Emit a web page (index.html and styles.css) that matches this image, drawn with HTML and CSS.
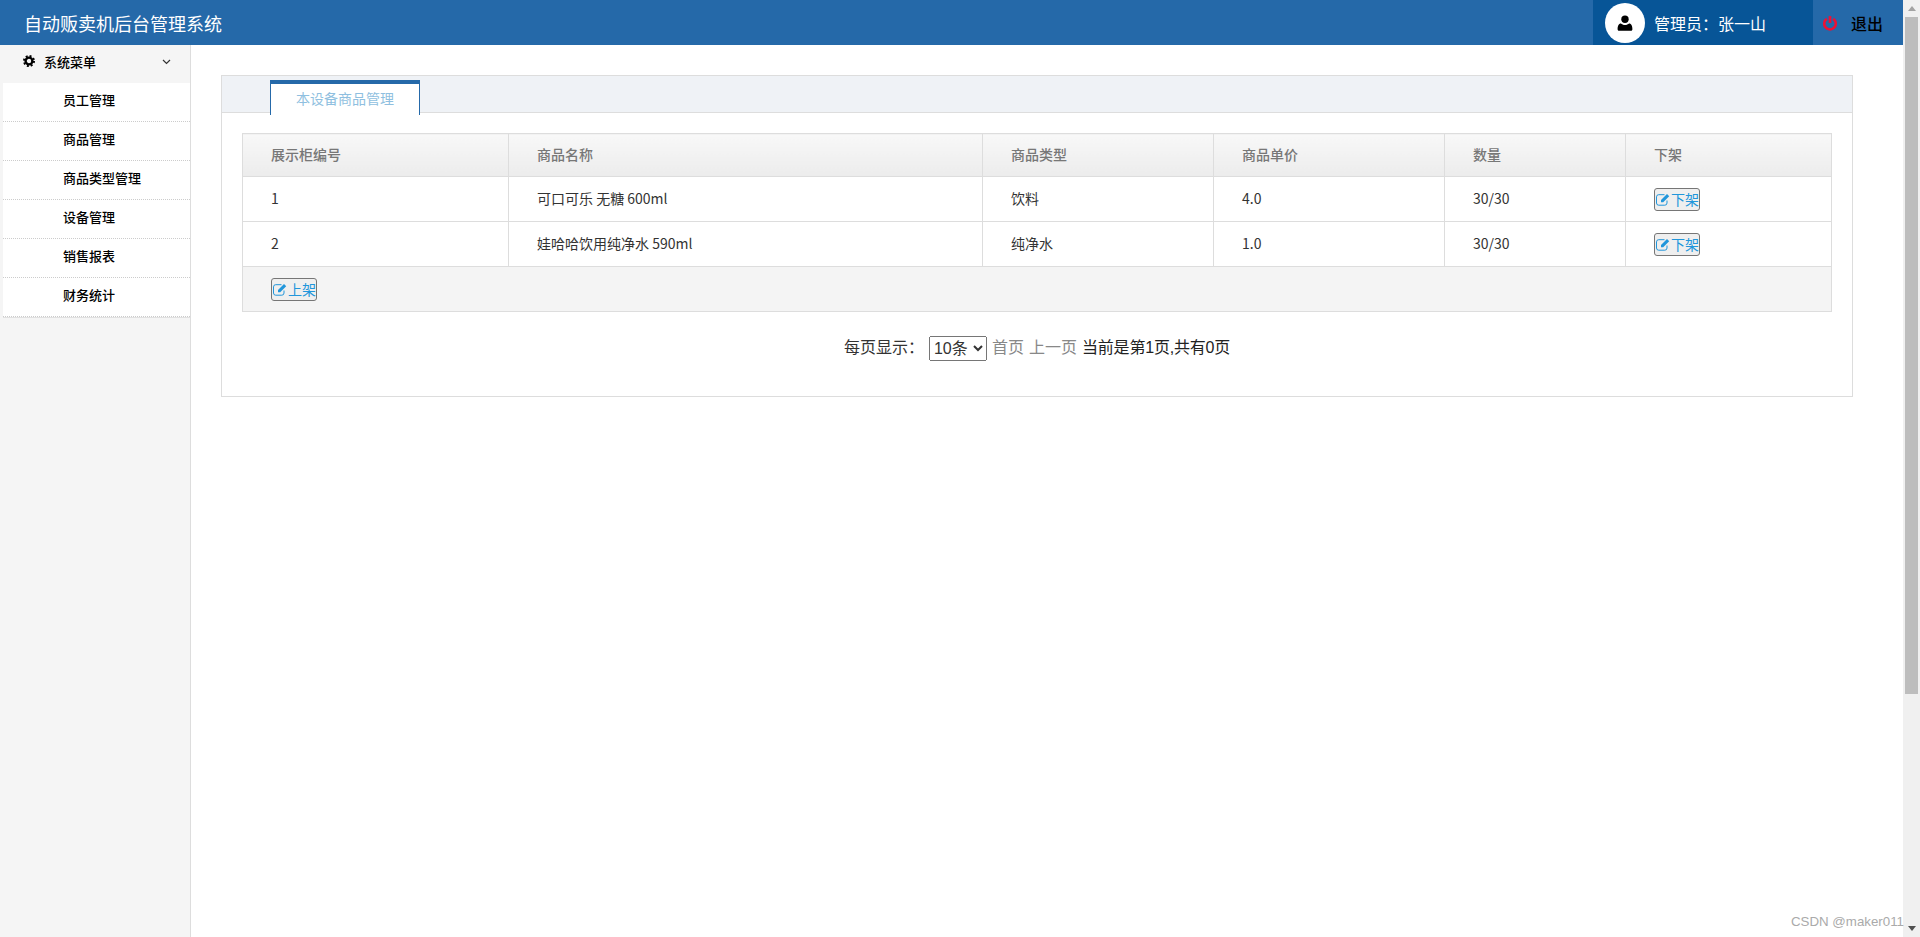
FILE: index.html
```html
<!DOCTYPE html>
<html lang="zh-CN">
<head>
  <meta charset="UTF-8">
  <title>自动贩卖机后台管理系统</title>
  <link rel="stylesheet" href="styles.css">
</head>

<body>
  <div class="app">
    <div class="content">
      <header class="topbar">
        <div class="brand">自动贩卖机后台管理系统</div>
        <div class="user-box">
          <span class="avatar">
            <svg width="16" height="16" viewBox="0 0 16 16"><circle cx="8" cy="4.2" r="3.7" fill="#000"/><path d="M2 15.800c-.9 0-1.400-.6-1.400-1.500 0-3.300 1-5.800 3.300-5.800 1 .9 2.500 1.500 4.100 1.500s3.100-.6 4.100-1.500c2.300 0 3.300 2.500 3.300 5.800 0 .9-.5 1.500-1.400 1.500z" fill="#000"/></svg>
          </span>
          <span class="user-name">管理员：张一山</span>
        </div>
        <a class="logout">
          <svg width="14" height="16" viewBox="0 0 14 16"><path d="M3.800 3.800a5.800 5.800 0 1 0 6.400 0" fill="none" stroke="#ee1035" stroke-width="2.600"/><path d="M7 1v7" stroke="#ee1035" stroke-width="2.600"/></svg>
          <span>退出</span>
        </a>
      </header>

      <div class="layout">
        <aside class="sidebar">
          <div class="menu-title">
            <svg class="gear" width="12" height="12" viewBox="0 0 12 12"><circle cx="6" cy="6" r="3.400" fill="none" stroke="#000" stroke-width="2.400"/><circle cx="6" cy="6" r="5" fill="none" stroke="#000" stroke-width="2" stroke-dasharray="1.950 1.977"/></svg>
            <span>系统菜单</span>
            <svg class="chevron" width="9" height="6" viewBox="0 0 9 6"><path d="M1 1l3.500 3.500L8 1" fill="none" stroke="#333" stroke-width="1.200"/></svg>
          </div>
          <ul class="menu-list">
            <li>员工管理</li>
            <li>商品管理</li>
            <li>商品类型管理</li>
            <li>设备管理</li>
            <li>销售报表</li>
            <li>财务统计</li>
          </ul>
        </aside>

        <main class="main">
          <div class="panel">
            <div class="tab-bar">
              <div class="tab">本设备商品管理</div>
            </div>
            <div class="panel-body">
              <table class="goods-table">
                <colgroup>
                  <col class="col-no">
                  <col class="col-name">
                  <col class="col-type">
                  <col class="col-price">
                  <col class="col-count">
                  <col>
                </colgroup>
                <thead>
                  <tr>
                    <th>展示柜编号</th>
                    <th>商品名称</th>
                    <th>商品类型</th>
                    <th>商品单价</th>
                    <th>数量</th>
                    <th>下架</th>
                  </tr>
                </thead>
                <tbody>
                  <tr>
                    <td>1</td>
                    <td>可口可乐 无糖 600ml</td>
                    <td>饮料</td>
                    <td>4.0</td>
                    <td>30/30</td>
                    <td class="cell-action">
                      <button class="btn-edit">
                        <svg width="15" height="14" viewBox="0 0 15 14"><path d="M11 8.500V11a2.200 2.200 0 0 1-2.200 2.200H2.700A2.200 2.200 0 0 1 .5 11V4.900a2.200 2.200 0 0 1 2.200-2.200H8.500" fill="none" stroke="currentColor" stroke-width="1"/><path d="M5 8l6-6 2.200 2.200-6 6H5z" fill="currentColor"/></svg>下架
                      </button>
                    </td>
                  </tr>
                  <tr>
                    <td>2</td>
                    <td>娃哈哈饮用纯净水 590ml</td>
                    <td>纯净水</td>
                    <td>1.0</td>
                    <td>30/30</td>
                    <td class="cell-action">
                      <button class="btn-edit">
                        <svg width="15" height="14" viewBox="0 0 15 14"><path d="M11 8.500V11a2.200 2.200 0 0 1-2.200 2.200H2.700A2.200 2.200 0 0 1 .5 11V4.900a2.200 2.200 0 0 1 2.200-2.200H8.500" fill="none" stroke="currentColor" stroke-width="1"/><path d="M5 8l6-6 2.200 2.200-6 6H5z" fill="currentColor"/></svg>下架
                      </button>
                    </td>
                  </tr>
                </tbody>
                <tfoot>
                  <tr>
                    <td class="cell-action" colspan="6">
                      <button class="btn-edit">
                        <svg width="15" height="14" viewBox="0 0 15 14"><path d="M11 8.500V11a2.200 2.200 0 0 1-2.200 2.200H2.700A2.200 2.200 0 0 1 .5 11V4.900a2.200 2.200 0 0 1 2.200-2.200H8.500" fill="none" stroke="currentColor" stroke-width="1"/><path d="M5 8l6-6 2.200 2.200-6 6H5z" fill="currentColor"/></svg>上架
                      </button>
                    </td>
                  </tr>
                </tfoot>
              </table>

              <div class="pager">
                <span>每页显示：</span>
                <select class="pager-size">
                  <option>10条</option>
                </select>
                <a class="pager-link">首页</a>
                <a class="pager-link">上一页</a>
                <span class="pager-info">当前是第1页,共有0页</span>
              </div>
            </div>
          </div>
        </main>
      </div>
    </div>

    <div class="scrollbar">
      <div class="arrow-up"></div>
      <div class="scroll-track"><div class="scroll-thumb"></div></div>
      <div class="arrow-down"></div>
    </div>
  </div>
  <div class="watermark">CSDN @maker011</div>
</body>
</html>
```

FILE: styles.css
```css
html, body {
  margin: 0;
  height: 100%;
  overflow: hidden;
}
*,
*::before,
*::after {
  box-sizing: border-box;
}
body {
  position: relative;
  font-family: "Noto Sans CJK SC", sans-serif;
  font-size: 14px;
  color: #333;
  background: #fff;
}
.app {
  display: flex;
  height: 937px;
}
.content {
  flex: 1;
  display: flex;
  flex-direction: column;
  min-width: 0;
}

/* top bar */
.topbar {
  display: flex;
  align-items: center;
  height: 45px;
  background: #2569a9;
  color: #fff;
}
.brand {
  flex: 1;
  padding-left: 24px;
  font-size: 18px;
  line-height: 44px;
}
.user-box {
  display: flex;
  align-items: center;
  width: 220px;
  height: 45px;
  padding-left: 12px;
  background: #075597;
}
.avatar {
  display: flex;
  align-items: center;
  justify-content: center;
  width: 40px;
  height: 40px;
  border-radius: 50%;
  background: #fff;
}
.user-name {
  margin-left: 9px;
  font-size: 16px;
}
.logout {
  display: flex;
  align-items: center;
  width: 90px;
  padding-left: 10px;
  font-size: 16px;
  font-weight: 500;
  color: #000;
}
.logout span {
  margin-left: 14px;
}

/* left menu */
.layout {
  flex: 1;
  display: flex;
  min-height: 0;
}
.sidebar {
  flex: none;
  width: 191px;
  border-right: 1px solid #ddd;
  background: #f5f5f5;
}
.menu-title {
  display: flex;
  align-items: center;
  height: 38px;
  padding: 0 0 6px 23px;
  font-size: 13px;
  font-weight: 500;
  color: #000;
}
.menu-title span {
  margin-left: 9px;
}
.chevron {
  margin-left: 66px;
  margin-top: 2px;
}
.menu-list {
  margin: 0 0 0 3px;
  padding: 0;
  list-style: none;
  border-bottom: 1px solid #e0e0e0;
  background: #fff;
}
.menu-list li {
  height: 39px;
  padding-left: 60px;
  border-bottom: 1px dotted #ccc;
  font-size: 13px;
  font-weight: 500;
  line-height: 33px;
  color: #000;
}

/* panel */
.main {
  flex: 1;
  min-width: 0;
  padding: 30px 50px 0 30px;
}
.panel {
  height: 322px;
  border: 1px solid #ddd;
}
.tab-bar {
  height: 37px;
  padding: 4px 0 0 48px;
  border-bottom: 1px solid #ddd;
  background: #eff2f6;
}
.tab {
  width: 150px;
  height: 35px;
  border: 1px solid #2569a9;
  border-top-width: 4px;
  border-bottom: 0;
  background: #fff;
  text-align: center;
  line-height: 29px;
  color: #8fbfe0;
}
.panel-body {
  padding: 20px 20px 0;
}

/* table */
.goods-table {
  width: 100%;
  table-layout: fixed;
  border-collapse: collapse;
  border: 1px solid #ddd;
}
.col-no { width: 266px; }
.col-name { width: 474px; }
.col-type { width: 231px; }
.col-price { width: 231px; }
.col-count { width: 181px; }
.goods-table th,
.goods-table td {
  padding: 0 0 0 28px;
  border: 1px solid #ddd;
  text-align: left;
}
.goods-table th {
  height: 43px;
  padding-bottom: 2px;
  background: linear-gradient(#f8f8f8, #ececec);
  font-weight: 500;
  color: #777;
}
.goods-table td {
  height: 45px;
  padding-bottom: 3px;
  color: #333;
}
.goods-table td.cell-action {
  padding-bottom: 0;
}
.goods-table tfoot td {
  background: #f4f4f4;
}
.btn-edit {
  display: inline-flex;
  align-items: center;
  width: 46px;
  height: 23px;
  padding: 0 0 0 1px;
  border: 1px solid #767676;
  border-radius: 3px;
  background: #efefef;
  font-family: inherit;
  font-size: 14px;
  white-space: nowrap;
  color: #2196db;
  vertical-align: middle;
}

/* pager */
.pager {
  display: flex;
  align-items: center;
  justify-content: center;
  gap: 5px;
  margin-top: 22px;
  font-family: "Liberation Sans", "Noto Sans CJK SC", sans-serif;
  font-size: 16px;
  line-height: 25px;
}
.pager-size {
  width: 58px;
  height: 25px;
  margin-top: 2px;
  font-family: inherit;
  font-size: 16px;
  color: #333;
}
.pager-link {
  color: #888;
}
.pager-info {
  letter-spacing: -0.2px;
  color: #222;
}

/* scrollbar */
.scrollbar {
  flex: none;
  display: flex;
  flex-direction: column;
  align-items: center;
  width: 17px;
  background: #f0f0f0;
}
.arrow-up,
.arrow-down {
  flex: none;
  width: 0;
  height: 0;
  margin: 6px 0;
  border-left: 4px solid transparent;
  border-right: 4px solid transparent;
}
.arrow-up {
  border-bottom: 5px solid #a3a3a3;
}
.arrow-down {
  border-top: 5px solid #505050;
}
.scroll-track {
  flex: 1;
  width: 100%;
  padding: 0 2px;
}
.scroll-thumb {
  height: 677px;
  background: #bdbdbd;
}

.watermark {
  position: absolute;
  right: 16px;
  bottom: 8px;
  font-family: "Liberation Sans", sans-serif;
  font-size: 13.3px;
  color: #aaa;
}
```
